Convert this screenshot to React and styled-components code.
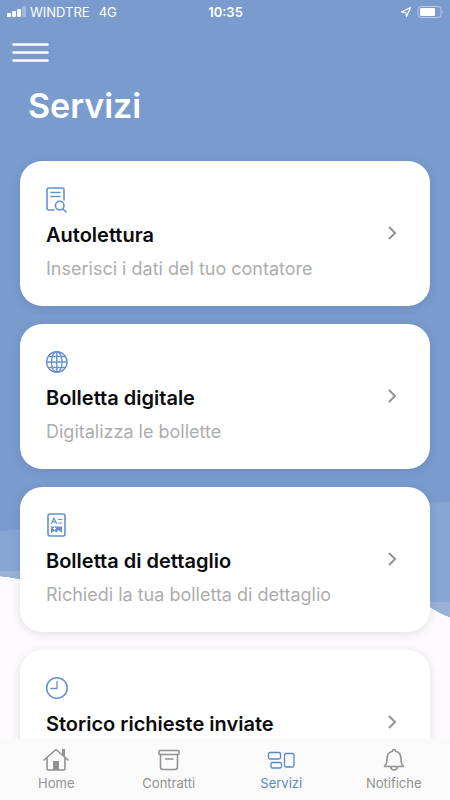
import React from "react";
import styled, { createGlobalStyle } from "styled-components";

const Global = createGlobalStyle`
  * { box-sizing: border-box; }
  body {
    margin: 0;
    background: #fdfbfd;
    font-family: Inter, "Liberation Sans", sans-serif;
  }
  h1, h2, p { margin: 0; }
`;

const Screen = styled.div`
  position: relative;
  isolation: isolate;
  display: flex;
  flex-direction: column;
  height: 100vh;
  overflow: hidden;
`;

const Backdrop = styled.svg`
  position: absolute;
  inset: 0;
  z-index: -1;
  width: 100%;
  height: 100%;
`;

const StatusBar = styled.div`
  flex: none;
  display: grid;
  grid-template-columns: 1fr auto 1fr;
  align-items: center;
  height: 24px;
  padding: 0 6px 0 7px;
  color: #fff;
  font-size: 13px;
  line-height: 16px;
`;

const StatusGroup = styled.div`
  display: flex;
  align-items: center;
  justify-content: ${(p) => (p.$end ? "flex-end" : "flex-start")};
  gap: ${(p) => (p.$end ? 5 : 4)}px;
`;

const Network = styled.span`
  margin-left: 5px;
`;

const Clock = styled.time`
  font-weight: 600;
`;

const Header = styled.header`
  flex: none;
  display: flex;
  flex-direction: column;
  align-items: flex-start;
  gap: 20px;
  padding: 16px 12px;
`;

const MenuButton = styled.button`
  display: flex;
  padding: 0;
  border: 0;
  background: none;
  color: #fff;
  cursor: pointer;
`;

const Title = styled.h1`
  padding-left: 16px;
  color: #fff;
  font-size: 34px;
  line-height: 44px;
  font-weight: 600;
`;

const ServiceList = styled.main`
  flex: 1;
  min-height: 0;
  display: flex;
  flex-direction: column;
  gap: 18px;
  padding: 17px 20px 18px;
  overflow-y: auto;
  scrollbar-width: none;
`;

const Card = styled.a`
  flex: none;
  display: flex;
  align-items: center;
  justify-content: space-between;
  padding: 23px 32px 24px 26px;
  border-radius: 22px;
  background: #fff;
  box-shadow: 0 2px 10px rgba(40, 50, 80, 0.14);
  color: #0b0b0d;
  text-decoration: none;
`;

const CardBody = styled.div`
  display: flex;
  flex-direction: column;
  min-width: 0;
`;

const CardTitle = styled.h2`
  margin: 8px 0;
  font-size: 20px;
  line-height: 26px;
  font-weight: 600;
`;

const CardText = styled.p`
  min-height: 26px;
  color: #adadad;
  font-size: 18px;
  line-height: 26px;
`;

const Icon = styled.svg`
  flex: none;
  display: block;
  fill: none;
  stroke: currentColor;
  stroke-linecap: round;
  stroke-linejoin: round;
`;

const CardIcon = styled(Icon)`
  height: 30px;
  width: 24px;
  color: #6692cf;
  stroke-width: 1.6;
`;

const Chevron = styled(Icon)`
  color: #939393;
  stroke-width: 2;
  stroke-linecap: butt;
  stroke-linejoin: miter;
`;

const TabBar = styled.nav`
  flex: none;
  display: grid;
  grid-template-columns: repeat(4, 1fr);
  background: #fafafa;
`;

const Tab = styled.a`
  display: flex;
  flex-direction: column;
  align-items: center;
  gap: 1px;
  padding: 7px 0 9px;
  color: ${(p) => (p.$active ? "#5689cc" : "#929292")};
  font-size: 13px;
  line-height: 16px;
  text-decoration: none;
`;

const services = [
  {
    title: "Autolettura",
    text: "Inserisci i dati del tuo contatore",
    icon: (
      <>
        <path d="M8 26H3Q1 26 1 24V6Q1 4 3 4H16Q18 4 18 6V16" />
        <path d="M5 8.500H14M5 12.500H14" />
        <circle cx="13.700" cy="21.600" r="4.300" />
        <path d="M17 25L20 28" />
      </>
    ),
  },
  {
    title: "Bolletta digitale",
    text: "Digitalizza le bollette",
    icon: (
      <g strokeWidth="1.400">
        <circle cx="10.800" cy="15" r="10.200" />
        <ellipse cx="10.800" cy="15" rx="5.300" ry="10.200" />
        <path d="M10.800 5V25M0.800 15H20.800M2.500 9.500H19M2.500 20.500H19" />
      </g>
    ),
  },
  {
    title: "Bolletta di dettaglio",
    text: "Richiedi la tua bolletta di dettaglio",
    icon: (
      <>
        <rect x="2" y="4" width="17" height="22" rx="2" />
        <path strokeWidth="1.200" d="M5.500 13.500L8 8L10.500 13.500M6.500 11.800H9.500M12.500 9.500H16M12.500 13H16" />
        <path fill="currentColor" stroke="none" fillRule="evenodd" d="M5 16.500H16V23L12.700 20L10.500 22.500L8.500 21L5 23ZM7 18V19H8V20H9V19H10V18H9V17H8V18Z" />
      </>
    ),
  },
  {
    title: "Storico richieste inviate",
    icon: (
      <>
        <circle cx="10.900" cy="15" r="10.300" />
        <path strokeWidth="1.300" d="M11 8.500V15.500H5" />
      </>
    ),
  },
];

const tabs = [
  {
    label: "Home",
    icon: (
      <>
        <path d="M2 14L14 3.500L26 14M5 12.500V22.500Q5 24 6.500 24H21.500Q23 24 23 22.500V12.500" />
        <path fill="currentColor" stroke="none" d="M11 15H17V24H11ZM20 3H23V11L20 8.400Z" />
      </>
    ),
  },
  {
    label: "Contratti",
    icon: (
      <>
        <rect x="4" y="4.500" width="20" height="4" rx="1" />
        <path d="M5.500 8.500V21Q5.500 23.500 8 23.500H20Q22.500 23.500 22.500 21V8.500M10.500 13H18" />
      </>
    ),
  },
  {
    label: "Servizi",
    active: true,
    icon: (
      <g strokeWidth="1.300">
        <rect x="1.500" y="6.500" width="12" height="6.500" rx="1.500" />
        <rect x="4" y="16.500" width="10.500" height="5.500" rx="1.500" />
        <rect x="17.500" y="7.500" width="9.500" height="13.500" rx="1.500" />
      </g>
    ),
  },
  {
    label: "Notifiche",
    icon: (
      <>
        <path d="M4.500 20.500C6.500 18.500 7 16 7 13C7 8.500 9 6 12.500 5.200C12.500 3 15.500 3 15.500 5.200C19 6 21 8.500 21 13C21 16 21.500 18.500 23.500 20.500Z" />
        <path d="M10.800 21C11 25 17 25 17.200 21" />
      </>
    ),
  },
];

export default function App() {
  return (
    <Screen>
      <Global />
      <Backdrop viewBox="0 0 450 800" preserveAspectRatio="none" aria-hidden="true">
        <path fill="#fdfbfd" d="M0 0H450V800H0Z" />
        <path fill="#799bce" d="M0 0H450V617Q438 613 426 604C320 548 180 604 20 579Q10 577 0 576Z" />
        <path fill="#88a6d4" d="M0 531Q220 505 450 502V617Q438 613 426 604C320 548 180 604 20 579Q10 577 0 576Z" />
        <path fill="#98b2da" d="M0 571H20V579Q10 577 0 576ZM424 602H450V617Q438 613 424 602Z" />
      </Backdrop>

      <StatusBar>
        <StatusGroup>
          <svg width="19" height="12" fill="#fff" aria-label="Segnale">
            <rect x="0" y="7" width="4" height="4" rx="1" />
            <rect x="5" y="5" width="4" height="6" rx="1" />
            <rect x="10" y="3" width="4" height="8" rx="1" />
            <rect x="15" y="0" width="4" height="11" rx="1" opacity="0.3" />
          </svg>
          <span>WINDTRE</span>
          <Network>4G</Network>
        </StatusGroup>
        <Clock>10:35</Clock>
        <StatusGroup $end>
          <Icon width="12" height="12" viewBox="0 0 12 12" aria-hidden="true">
            <path d="M1.500 6L10.500 1.500L6.500 10.500L5.800 6.500Z" strokeWidth="1.200" />
          </Icon>
          <svg width="27" height="13" aria-label="Batteria">
            <rect x="1" y="0.500" width="23" height="11" rx="3" fill="none" stroke="#fff" strokeOpacity="0.45" />
            <rect x="3" y="2" width="15" height="8" rx="1" fill="#fff" />
            <path d="M25.500 4Q27 6 25.500 8Z" fill="#fff" opacity="0.5" />
          </svg>
        </StatusGroup>
      </StatusBar>

      <Header>
        <MenuButton type="button" aria-label="Menu">
          <Icon width="37" height="24" strokeWidth="2.600" aria-hidden="true">
            <path d="M1.500 4.500H35.500M1.500 12.500H35.500M1.500 20.500H35.500" />
          </Icon>
        </MenuButton>
        <Title>Servizi</Title>
      </Header>

      <ServiceList>
        {services.map((s) => (
          <Card key={s.title} href="#">
            <CardBody>
              <CardIcon viewBox="0 0 24 30" aria-hidden="true">{s.icon}</CardIcon>
              <CardTitle>{s.title}</CardTitle>
              <CardText>{s.text}</CardText>
            </CardBody>
            <Chevron width="12" height="14" viewBox="0 0 12 14" aria-hidden="true">
              <path d="M3 1L9 7L3 13" />
            </Chevron>
          </Card>
        ))}
      </ServiceList>

      <TabBar>
        {tabs.map((t) => (
          <Tab key={t.label} href="#" $active={t.active} aria-current={t.active ? "page" : undefined}>
            <Icon width="28" height="28" viewBox="0 0 28 28" strokeWidth="1.600" aria-hidden="true">
              {t.icon}
            </Icon>
            {t.label}
          </Tab>
        ))}
      </TabBar>
    </Screen>
  );
}
